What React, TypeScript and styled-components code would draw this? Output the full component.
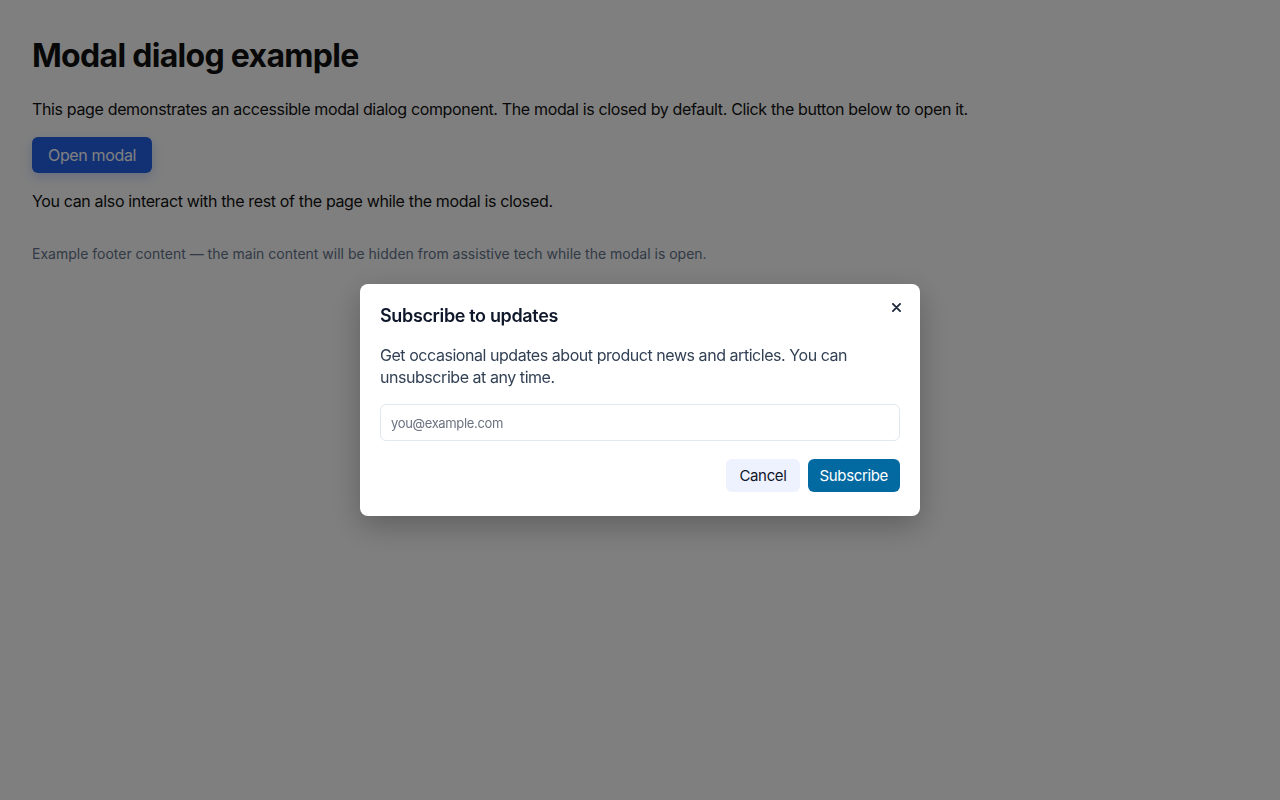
import React from 'react';
import styled, { createGlobalStyle } from 'styled-components';

const GlobalStyle = createGlobalStyle`
  * { box-sizing: border-box; }
  html, body {
    margin: 0;
    padding: 0;
    background: #ffffff;
    font-family: Inter, "Noto Sans", "Liberation Sans", sans-serif;
    letter-spacing: -0.35px;
    color: #111111;
  }
  button, input { letter-spacing: -0.35px; }
`;

const Page = styled.main`
  padding: 32px;
  min-height: 800px;
`;

const Title = styled.h1`
  margin: 4px 0 0;
  font-size: 32px;
  line-height: 40px;
  font-weight: 700;
  letter-spacing: -0.7px;
`;

const Text = styled.p`
  margin: 0;
  font-size: 16px;
  line-height: 24px;
`;

const Intro = styled(Text)`
  margin-top: 21px;
`;

const OpenButton = styled.button`
  margin-top: 16px;
  height: 36px;
  padding: 0 16px;
  border: none;
  border-radius: 6px;
  background: #2563eb;
  color: #ffffff;
  font-family: inherit;
  font-size: 16px;
  box-shadow: 0 4px 12px rgba(37, 99, 235, 0.25);
`;

const After = styled(Text)`
  margin-top: 16px;
`;

const Footer = styled.footer`
  margin-top: 31px;
  font-size: 14px;
  line-height: 20px;
  letter-spacing: 0;
  color: #64748b;
`;

const Overlay = styled.div`
  position: fixed;
  inset: 0;
  background: rgba(0, 0, 0, 0.5);
  display: flex;
  align-items: center;
  justify-content: center;
`;

const Dialog = styled.div`
  position: relative;
  width: 560px;
  background: #ffffff;
  border-radius: 8px;
  padding: 20px 20px 24px;
  box-shadow: 0 10px 30px rgba(0, 0, 0, 0.25);
`;

const DialogTitle = styled.h2`
  margin: 0;
  font-size: 18px;
  line-height: 24px;
  font-weight: 600;
  color: #0f172a;
`;

const DialogText = styled.p`
  margin: 16px 0 0;
  font-size: 16px;
  line-height: 22px;
  letter-spacing: -0.45px;
  color: #334155;
`;

const CloseButton = styled.button`
  position: absolute;
  top: 11px;
  right: 12px;
  width: 24px;
  height: 24px;
  border: none;
  background: transparent;
  padding: 0;
  display: flex;
  align-items: center;
  justify-content: center;
  color: #1e293b;
`;

const Input = styled.input`
  display: block;
  width: 100%;
  margin-top: 16px;
  height: 37px;
  padding: 0 10px;
  border: 1px solid #e2e8f0;
  border-radius: 6px;
  font-family: inherit;
  font-size: 13px;
  color: #111;
  &::placeholder { color: #6b7280; }
`;

const Actions = styled.div`
  display: flex;
  justify-content: flex-end;
  gap: 8px;
  margin-top: 18px;
`;

const ActionButton = styled.button<{ $primary?: boolean }>`
  height: 33px;
  padding: 0 ${(p) => (p.$primary ? '12px' : '13px')};
  border: none;
  border-radius: 6px;
  font-family: inherit;
  font-size: 15px;
  background: ${(p) => (p.$primary ? '#0369a1' : '#eef2ff')};
  color: ${(p) => (p.$primary ? '#ffffff' : '#0f172a')};
`;

export default function App() {
  return (
    <>
      <GlobalStyle />
      <Page>
        <Title>Modal dialog example</Title>
        <Intro>
          This page demonstrates an accessible modal dialog component. The modal is closed by
          default. Click the button below to open it.
        </Intro>
        <OpenButton>Open modal</OpenButton>
        <After>You can also interact with the rest of the page while the modal is closed.</After>
        <Footer>
          Example footer content — the main content will be hidden from assistive tech while the
          modal is open.
        </Footer>
      </Page>
      <Overlay>
        <Dialog role="dialog" aria-modal="true">
          <CloseButton aria-label="Close">
            <svg width="9" height="9" viewBox="0 0 10 10">
              <path d="M1 1L9 9M9 1L1 9" stroke="currentColor" strokeWidth="2" strokeLinecap="round" />
            </svg>
          </CloseButton>
          <DialogTitle>Subscribe to updates</DialogTitle>
          <DialogText>
            Get occasional updates about product news and articles. You can unsubscribe at any
            time.
          </DialogText>
          <Input placeholder="you@example.com" />
          <Actions>
            <ActionButton>Cancel</ActionButton>
            <ActionButton $primary>Subscribe</ActionButton>
          </Actions>
        </Dialog>
      </Overlay>
    </>
  );
}
